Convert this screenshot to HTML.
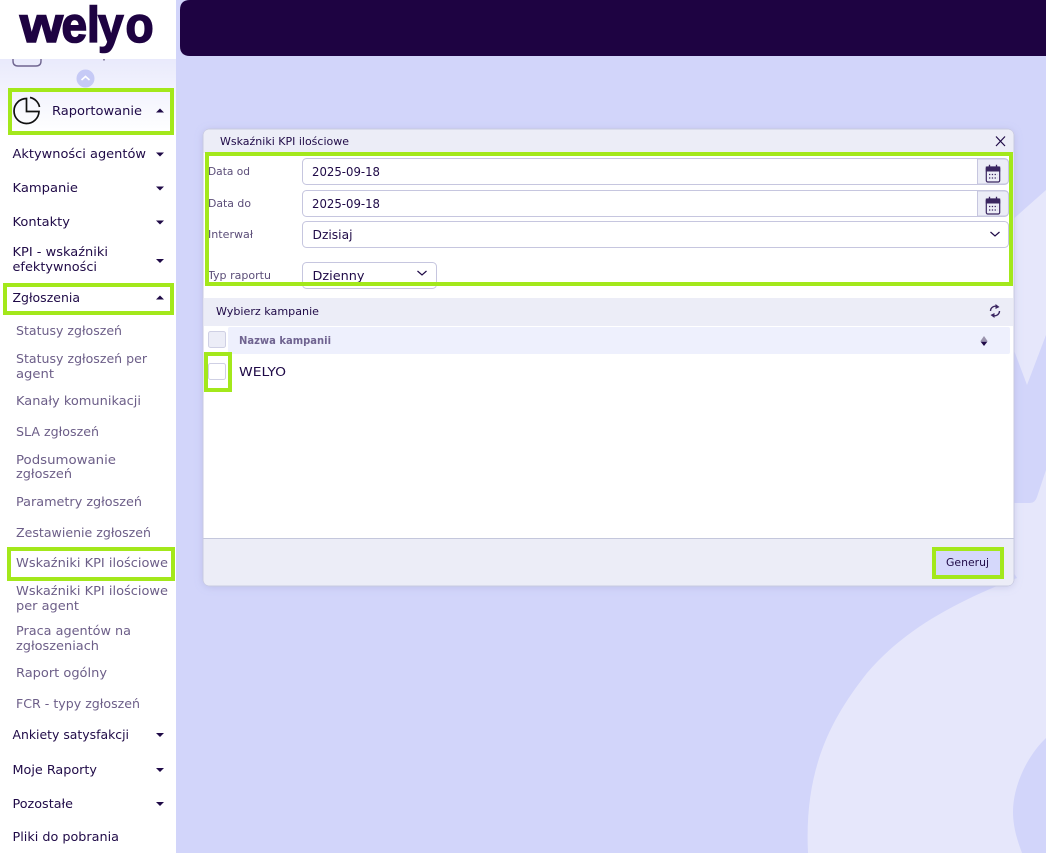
<!DOCTYPE html>
<html lang="pl"><head><meta charset="utf-8"><title>Wskaźniki KPI ilościowe</title>
<style>
html,body{margin:0;padding:0;width:1046px;height:853px;overflow:hidden;background:#d2d5fa}
svg{display:block}
text{font-family:"DejaVu Sans","Liberation Sans",sans-serif;font-size:12px;fill:#1f0a47}
.s text{fill:#6c5e88}
.l text{fill:#5b4d78;font-size:11px}
.g{fill:none;stroke:#a3e81b;stroke-width:4}
.b{fill:#fff;stroke:#c6c6df;stroke-width:1}
.c{fill:#1f0a47}
.logo{font-family:"Liberation Sans",sans-serif;font-size:50px;font-weight:700;stroke:#1e0342;stroke-width:1.6px;fill:#1e0342}
</style></head><body>
<svg width="1046" height="853" viewBox="0 0 1046 853" xmlns="http://www.w3.org/2000/svg">
<defs>
<linearGradient id="sg" x1="0" y1="0" x2="0" y2="1"><stop offset="0" stop-color="#e9eafc"/><stop offset="1" stop-color="#fff"/></linearGradient>
<filter id="sh" x="-5%" y="-5%" width="110%" height="110%"><feDropShadow dx="0" dy="1" stdDeviation="4" flood-color="#8f93c8" flood-opacity=".3"/></filter>
</defs>
<rect width="1046" height="853" fill="#d2d5fa"/>
<!-- background watermark -->
<path d="M1010 222 L1046 190 V335 L1027 385 L1012 345Z" fill="#e6e7fb"/>
<path d="M1012 503 H1030 Q1035 503 1037 497 L1046 470 V738 C1028 755 1013 785 1013 812 C1013 826 1017 840 1022 853 H808 C804 770 830 720 867 673 C905 628 960 600 1017 578 L1012 570Z" fill="#e6e7fb"/>
<!-- top bar -->
<path d="M190 0 H1046 V56 H190 Q180 56 180 46 V10 Q180 0 190 0Z" fill="#1e0342"/>
<!-- sidebar -->
<rect width="176" height="853" fill="#fff"/>
<rect y="59" width="176" height="75" fill="url(#sg)"/>
<path d="M13 59 V61 Q13 66 18 66 H36 Q41 66 41 61 V59" fill="none" stroke="#6f6590" stroke-width="1.4"/>
<rect x="103" y="59" width="2" height="1.500" fill="#8f86a8"/>
<circle cx="85.500" cy="78.500" r="9" fill="#c6caf6"/>
<path d="M81.500 80 L85.500 76.500 L89.500 80" fill="none" stroke="#fff" stroke-width="1.600"/>
<text class="logo" x="20" y="42" textLength="43" lengthAdjust="spacingAndGlyphs">w</text>
<text class="logo" transform="scale(.92 1)" x="66.800 94.600 106.500 136.400" y="42">elyo</text>

<!-- sidebar text -->
<text x="52" y="115" textLength="90" lengthAdjust="spacingAndGlyphs">Raportowanie</text>
<text x="12.500" y="158" textLength="133.500" lengthAdjust="spacingAndGlyphs">Aktywności agentów</text>
<text x="12.500" y="192" textLength="65.500" lengthAdjust="spacingAndGlyphs">Kampanie</text>
<text x="12.500" y="226" textLength="57.500" lengthAdjust="spacingAndGlyphs">Kontakty</text>
<text x="12.500" y="256" textLength="95.500" lengthAdjust="spacingAndGlyphs">KPI - wskaźniki</text>
<text x="12.500" y="271" textLength="84.500" lengthAdjust="spacingAndGlyphs">efektywności</text>
<text x="12.500" y="302" textLength="67.500" lengthAdjust="spacingAndGlyphs">Zgłoszenia</text>
<g class="s">
<text x="16" y="335" textLength="106" lengthAdjust="spacingAndGlyphs">Statusy zgłoszeń</text>
<text x="16" y="363" textLength="131" lengthAdjust="spacingAndGlyphs">Statusy zgłoszeń per</text>
<text x="16" y="378" textLength="38" lengthAdjust="spacingAndGlyphs">agent</text>
<text x="16" y="405" textLength="125" lengthAdjust="spacingAndGlyphs">Kanały komunikacji</text>
<text x="16" y="436" textLength="83" lengthAdjust="spacingAndGlyphs">SLA zgłoszeń</text>
<text x="16" y="464" textLength="100" lengthAdjust="spacingAndGlyphs">Podsumowanie</text>
<text x="16" y="478" textLength="56" lengthAdjust="spacingAndGlyphs">zgłoszeń</text>
<text x="16" y="506" textLength="126" lengthAdjust="spacingAndGlyphs">Parametry zgłoszeń</text>
<text x="16" y="537" textLength="135" lengthAdjust="spacingAndGlyphs">Zestawienie zgłoszeń</text>
<text x="16" y="567" textLength="152" lengthAdjust="spacingAndGlyphs">Wskaźniki KPI ilościowe</text>
<text x="16" y="595" textLength="152" lengthAdjust="spacingAndGlyphs">Wskaźniki KPI ilościowe</text>
<text x="16" y="610" textLength="63" lengthAdjust="spacingAndGlyphs">per agent</text>
<text x="16" y="635" textLength="115" lengthAdjust="spacingAndGlyphs">Praca agentów na</text>
<text x="16" y="650" textLength="83" lengthAdjust="spacingAndGlyphs">zgłoszeniach</text>
<text x="16" y="677" textLength="91" lengthAdjust="spacingAndGlyphs">Raport ogólny</text>
<text x="16" y="708" textLength="124" lengthAdjust="spacingAndGlyphs">FCR - typy zgłoszeń</text>
</g>
<text x="12.500" y="739" textLength="116.500" lengthAdjust="spacingAndGlyphs">Ankiety satysfakcji</text>
<text x="12.500" y="774" textLength="84.500" lengthAdjust="spacingAndGlyphs">Moje Raporty</text>
<text x="12.500" y="808" textLength="60.500" lengthAdjust="spacingAndGlyphs">Pozostałe</text>
<text x="12.500" y="841" textLength="106.500" lengthAdjust="spacingAndGlyphs">Pliki do pobrania</text>

<!-- carets -->
<path class="c" d="M156 112.500 L160 108.500 L164 112.500Z"/>
<path class="c" d="M156 152.500 H164 L160 156.500Z"/>
<path class="c" d="M156 186.500 H164 L160 190.500Z"/>
<path class="c" d="M156 220.500 H164 L160 224.500Z"/>
<path class="c" d="M156 259 H164 L160 263Z"/>
<path class="c" d="M156 299.500 L160 295.500 L164 299.500Z"/>
<path class="c" d="M156 733 H164 L160 737Z"/>
<path class="c" d="M156 768 H164 L160 772Z"/>
<path class="c" d="M156 802 H164 L160 806Z"/>
<!-- pie icon -->
<g fill="none" stroke="#111" stroke-width="1.700">
<path d="M26.500 98.500 A12.500 12.500 0 1 0 39 111.500 H26.500Z"/>
<path d="M30 97.500 A12 12 0 0 1 39.500 107"/>
</g>

<!-- modal -->
<g filter="url(#sh)"><rect x="203" y="129" width="811" height="457" rx="7" fill="#fff" stroke="#c8cae0"/></g>
<path d="M203.500 153 V136 Q203.500 129.500 210 129.500 H1007 Q1013.500 129.500 1013.500 136 V153Z" fill="#ecedf7"/>
<text x="220" y="145" textLength="129" lengthAdjust="spacingAndGlyphs" style="font-size:11px">Wskaźniki KPI ilościowe</text>
<path d="M996 136.500 L1005 146 M1005 136.500 L996 146" stroke="#1f0a47" stroke-width="1.200" fill="none"/>

<g class="l">
<text x="208" y="175" textLength="42" lengthAdjust="spacingAndGlyphs">Data od</text>
<text x="208" y="207" textLength="43" lengthAdjust="spacingAndGlyphs">Data do</text>
<text x="208" y="238" textLength="45" lengthAdjust="spacingAndGlyphs">Interwał</text>
<text x="208" y="279" textLength="63" lengthAdjust="spacingAndGlyphs">Typ raportu</text>
</g>

<rect class="b" x="302.500" y="158.500" width="706" height="26" rx="4"/>
<path d="M977.500 159 H1004.500 Q1008.500 159 1008.500 163 V180 Q1008.500 184 1004.500 184 H977.500Z" fill="#ecedf7" stroke="#c6c6df"/>
<rect class="b" x="302.500" y="190.500" width="706" height="26" rx="4"/>
<path d="M977.500 191 H1004.500 Q1008.500 191 1008.500 195 V212 Q1008.500 216 1004.500 216 H977.500Z" fill="#ecedf7" stroke="#c6c6df"/>
<rect class="b" x="302.500" y="221.500" width="706" height="26" rx="4"/>
<rect class="b" x="302.500" y="262.500" width="134" height="26" rx="4"/>
<text x="312" y="176" textLength="68" lengthAdjust="spacingAndGlyphs">2025-09-18</text>
<text x="312" y="208" textLength="68" lengthAdjust="spacingAndGlyphs">2025-09-18</text>
<text x="312.500" y="239" textLength="40" lengthAdjust="spacingAndGlyphs">Dzisiaj</text>
<text x="312.500" y="280" textLength="52" lengthAdjust="spacingAndGlyphs">Dzienny</text>
<path d="M990.500 232 L995 236 L999.500 232" fill="none" stroke="#1f0a47" stroke-width="1.200"/>
<path d="M417.500 271 L422 275 L426.500 271" fill="none" stroke="#1f0a47" stroke-width="1.200"/>
<!-- calendars -->
<g fill="none" stroke="#3a2661">
<rect x="986.300" y="167" width="13.400" height="15" rx="1.500" stroke-width="1.200"/>
<rect x="986.300" y="167" width="13.400" height="4" fill="#3a2661" stroke-width="1"/>
<path d="M989.500 164.700 V167 M996.500 164.700 V167" stroke-width="1.300"/>
<path d="M989 174.500 H997.500 M989 178 H997.500" stroke-width="1.300" stroke-dasharray="1.300 1.500"/>
</g>
<g fill="none" stroke="#3a2661" transform="translate(0 32)">
<rect x="986.300" y="167" width="13.400" height="15" rx="1.500" stroke-width="1.200"/>
<rect x="986.300" y="167" width="13.400" height="4" fill="#3a2661" stroke-width="1"/>
<path d="M989.500 164.700 V167 M996.500 164.700 V167" stroke-width="1.300"/>
<path d="M989 174.500 H997.500 M989 178 H997.500" stroke-width="1.300" stroke-dasharray="1.300 1.500"/>
</g>

<!-- campaign section -->
<rect x="204" y="298" width="809" height="28" fill="#ecedf7"/>
<text x="216" y="315" textLength="103" lengthAdjust="spacingAndGlyphs" style="font-size:11px">Wybierz kampanie</text>
<g fill="none" stroke="#3a2661" stroke-width="1.400">
<path d="M990.500 311 A4.800 4.800 0 0 1 997.500 306.800"/>
<path d="M999.500 311 A4.800 4.800 0 0 1 992.500 315.200"/>
</g>
<path fill="#3a2661" d="M995.500 304 L999.500 307 L995.500 309Z M994.500 318 L990.500 315 L994.500 313Z"/>
<rect x="228" y="327" width="782" height="27" rx="2" fill="#eef0fd"/>
<rect x="208.500" y="331.500" width="17" height="16" rx="2" fill="#ecedf7" stroke="#cfd0e4"/>
<text x="239" y="344" textLength="92" lengthAdjust="spacingAndGlyphs" style="font-size:11px;font-weight:700;fill:#6f6390">Nazwa kampanii</text>
<path d="M980.500 341 L984 336 L987.500 341Z" fill="#9a93ad"/>
<path d="M980.500 341.500 H987.500 L984 346Z" fill="#1f0a47"/>
<rect x="208.500" y="363.500" width="17" height="16" rx="2" fill="#fff" stroke="#cfd0e4"/>
<text x="239" y="376" textLength="47" lengthAdjust="spacingAndGlyphs">WELYO</text>

<!-- footer -->
<path d="M203.500 538.500 H1013.500 V579 Q1013.500 585.500 1007 585.500 H210 Q203.500 585.500 203.500 579Z" fill="#ecedf7"/>
<path d="M203.500 538.500 H1013.500" stroke="#c4c7dc" fill="none"/>
<rect x="934" y="549" width="68" height="28" fill="#d5d8fb"/>
<text x="946" y="566" textLength="43" lengthAdjust="spacingAndGlyphs" style="font-size:11px">Generuj</text>

<!-- highlight boxes -->
<rect class="g" x="10" y="90" width="162" height="43"/>
<rect class="g" x="5" y="285" width="167" height="28"/>
<rect class="g" x="9" y="549" width="164" height="30"/>
<rect class="g" x="207" y="154" width="804" height="130"/>
<rect class="g" x="206" y="354" width="24" height="36"/>
<rect class="g" x="934" y="549" width="68" height="28"/>
</svg>
</body></html>
